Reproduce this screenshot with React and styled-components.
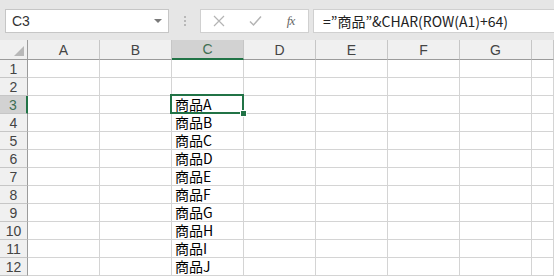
import React from 'react';
import styled, { createGlobalStyle } from 'styled-components';

const GlobalStyle = createGlobalStyle`
  html, body {
    margin: 0;
    padding: 0;
    background: #ffffff;
    overflow: hidden;
  }
`;

const GREEN = '#217346';
const COLS = ['A', 'B', 'C', 'D', 'E', 'F', 'G', 'H'];
const ROWS = 12;
const SELECTED = { col: 'C', row: 3 };

const Sheet = styled.div`
  width: 554px;
  height: 279px;
  overflow: hidden;
  font-family: 'Noto Sans CJK JP', 'Liberation Sans', sans-serif;
`;

const FormulaBar = styled.div`
  display: flex;
  align-items: flex-start;
  height: 40px;
  box-sizing: border-box;
  padding: 9px 0 0 5px;
  background: #e6e6e6;
`;

const NameBox = styled.div`
  position: relative;
  display: flex;
  align-items: center;
  width: 164px;
  height: 24px;
  box-sizing: border-box;
  padding-left: 6px;
  background: #fff;
  border: 1px solid #c6c6c6;
  font-family: 'Liberation Sans', sans-serif;
  font-size: 14px;
  color: #333;

  &:after {
    content: '';
    position: absolute;
    right: 6px;
    top: 9px;
    border-left: 4px solid transparent;
    border-right: 4px solid transparent;
    border-top: 4px solid #7a7a7a;
  }
`;

const Dots = styled.div`
  display: flex;
  flex-direction: column;
  gap: 2px;
  margin: 7px 14px 0 15px;

  span {
    width: 2px;
    height: 2px;
    background: #b8b8b8;
  }
`;

const ButtonGroup = styled.div`
  display: flex;
  align-items: center;
  width: 109px;
  height: 24px;
  box-sizing: border-box;
  background: #fff;
  border: 1px solid #d0d0d0;
`;

const IconButton = styled.div`
  display: flex;
  align-items: center;
  justify-content: center;
  width: ${({ $w }) => $w}px;
  height: 100%;
  color: #b4b4b4;
`;

const Fx = styled.span`
  font-family: 'Liberation Serif', serif;
  font-style: italic;
  font-size: 13px;
  color: #666;
  letter-spacing: -1px;
`;

const FormulaInput = styled.div`
  flex: 1;
  height: 24px;
  margin-left: 4px;
  box-sizing: border-box;
  padding: 1px 0 0 9px;
  background: #fff;
  border: 1px solid #d0d0d0;
  border-right: none;
  font-size: 14px;
  line-height: 20px;
  color: #222;
  white-space: nowrap;
`;

const Grid = styled.div`
  display: grid;
  grid-template-columns: 28px repeat(${COLS.length - 1}, 72px) 22px;
  grid-auto-rows: 18px;
  grid-template-rows: 20px;
`;

const Corner = styled.div`
  position: relative;
  background: #f0f0f0;
  border-right: 1px solid #9b9b9b;
  border-bottom: 1px solid #9b9b9b;
  box-sizing: border-box;

  &:after {
    content: '';
    position: absolute;
    right: 3px;
    bottom: 3px;
    border-left: 10px solid transparent;
    border-bottom: 10px solid #b8b8b8;
  }
`;

const ColHeader = styled.div`
  display: flex;
  align-items: center;
  justify-content: center;
  box-sizing: border-box;
  background: ${({ $active }) => ($active ? '#d2d2d2' : '#f0f0f0')};
  border-right: 1px solid #c6c6c6;
  border-bottom: ${({ $active }) => ($active ? `2px solid ${GREEN}` : '1px solid #9b9b9b')};
  font-family: 'Liberation Sans', sans-serif;
  font-size: 14px;
  color: ${({ $active }) => ($active ? '#3f6f52' : '#444')};
`;

const RowHeader = styled.div`
  display: flex;
  align-items: center;
  justify-content: center;
  box-sizing: border-box;
  background: ${({ $active }) => ($active ? '#d2d2d2' : '#f0f0f0')};
  border-bottom: 1px solid #c6c6c6;
  border-right: ${({ $active }) => ($active ? `2px solid ${GREEN}` : '1px solid #9b9b9b')};
  font-family: 'Liberation Sans', sans-serif;
  font-size: 14px;
  line-height: 16px;
  color: ${({ $active }) => ($active ? '#3f6f52' : '#444')};
`;

const Cell = styled.div`
  position: relative;
  box-sizing: border-box;
  border-right: 1px solid #d4d4d4;
  border-bottom: 1px solid #d4d4d4;
  padding-left: 3px;
  font-size: 14px;
  line-height: 17px;
  color: #000;
  white-space: nowrap;

  ${({ $selected }) =>
    $selected &&
    `
    z-index: 1;
    &:before {
      content: '';
      position: absolute;
      left: -2px;
      top: -2px;
      right: -1px;
      bottom: -1px;
      border: 2px solid ${GREEN};
    }
    &:after {
      content: '';
      position: absolute;
      right: -4px;
      bottom: -4px;
      width: 5px;
      height: 5px;
      background: ${GREEN};
      border: 1px solid #fff;
    }
  `}
`;

const CloseIcon = () => (
  <svg width="12" height="12" viewBox="0 0 12 12">
    <path d="M1 1L11 11M11 1L1 11" stroke="currentColor" strokeWidth="1.2" fill="none" />
  </svg>
);

const CheckIcon = () => (
  <svg width="13" height="12" viewBox="0 0 13 12">
    <path d="M1 6.5L4.5 10L12 1.5" stroke="currentColor" strokeWidth="1.5" fill="none" />
  </svg>
);

const cellValue = (col, row) => (col === 'C' && row >= 3 ? '商品' + String.fromCharCode(62 + row) : '');

export default function App() {
  const rows = Array.from({ length: ROWS }, (_, i) => i + 1);

  return (
    <>
      <GlobalStyle />
      <Sheet>
        <FormulaBar>
          <NameBox>C3</NameBox>
          <Dots>
            <span />
            <span />
            <span />
          </Dots>
          <ButtonGroup>
            <IconButton $w={36}>
              <CloseIcon />
            </IconButton>
            <IconButton $w={36}>
              <CheckIcon />
            </IconButton>
            <IconButton $w={35}>
              <Fx>fx</Fx>
            </IconButton>
          </ButtonGroup>
          <FormulaInput>=”商品”&amp;CHAR(ROW(A1)+64)</FormulaInput>
        </FormulaBar>
        <Grid>
          <Corner />
          {COLS.map((c, i) => (
            <ColHeader key={c} $active={c === SELECTED.col}>
              {i < COLS.length - 1 ? c : ''}
            </ColHeader>
          ))}
          {rows.map(r => (
            <React.Fragment key={r}>
              <RowHeader $active={r === SELECTED.row}>{r}</RowHeader>
              {COLS.map(c => (
                <Cell key={c} $selected={c === SELECTED.col && r === SELECTED.row}>
                  {cellValue(c, r)}
                </Cell>
              ))}
            </React.Fragment>
          ))}
        </Grid>
      </Sheet>
    </>
  );
}
